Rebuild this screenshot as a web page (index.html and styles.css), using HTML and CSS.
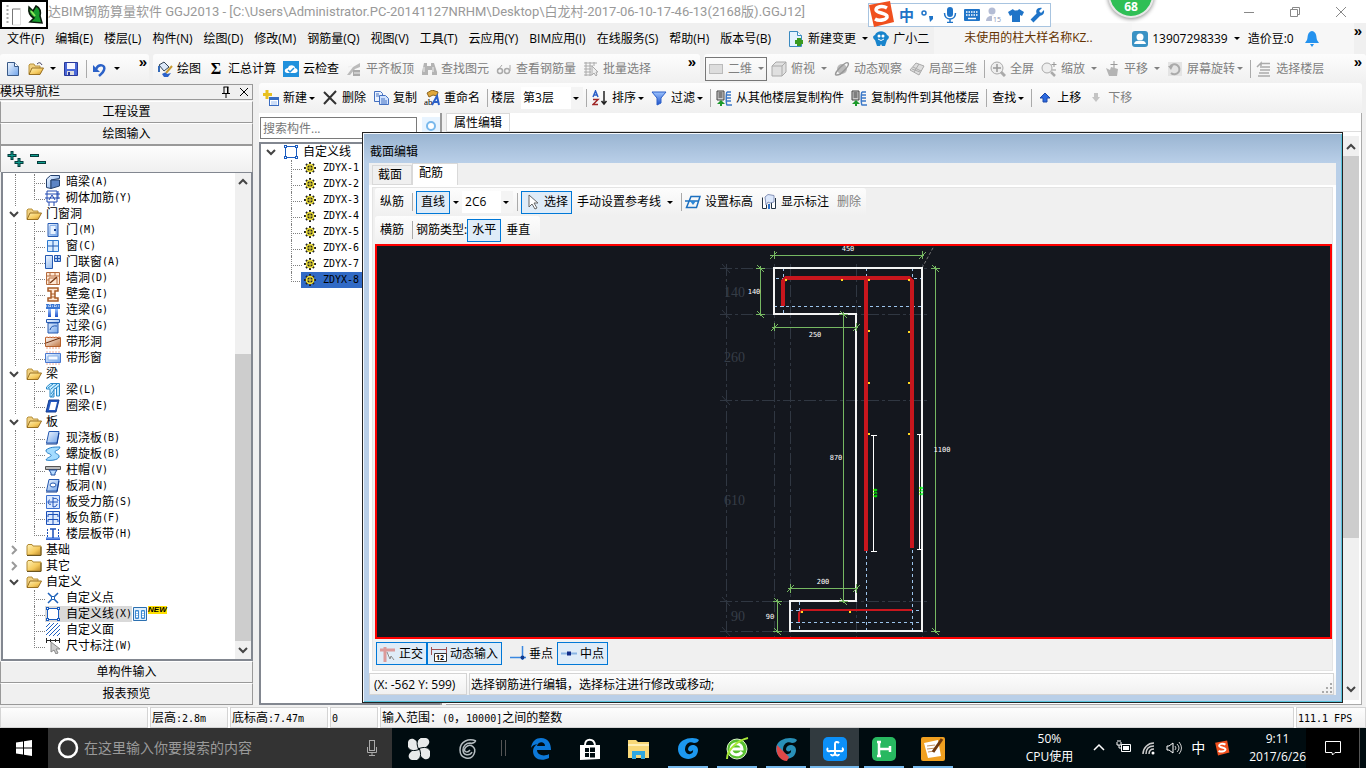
FILE: index.html
```html
<!DOCTYPE html>
<html lang="zh-CN">
<head>
    <meta charset="UTF-8">
    <meta name="viewport" content="width=device-width, initial-scale=1.0">
    <title>GGJ2013</title>
    <link rel="stylesheet" href="styles.css">
</head>
<body>
    <!-- shared gradients and repeated icons -->
    <svg class="defs" width="0" height="0">
        <defs>
            <linearGradient id="gold" x1="0" y1="0" x2="1" y2="1"><stop offset="0" stop-color="#fff3b8"/><stop offset=".6" stop-color="#f5c95c"/><stop offset="1" stop-color="#b8862a"/></linearGradient>
            <linearGradient id="blue" x1="0" y1="0" x2="1" y2="1"><stop offset="0" stop-color="#f4f9ff"/><stop offset="1" stop-color="#6fa3ea"/></linearGradient>
            <linearGradient id="deep" x1="0" y1="0" x2="0" y2="1"><stop offset="0" stop-color="#9cc3ff"/><stop offset="1" stop-color="#1c50c8"/></linearGradient>
            <linearGradient id="brown" x1="0" y1="0" x2="1" y2="1"><stop offset="0" stop-color="#fff"/><stop offset="1" stop-color="#c0723c"/></linearGradient>
        </defs>
        <symbol id="open" viewBox="0 0 16 16"><path d="M1 13V4l1-1h4l1 2h5v2" fill="#f0d080" stroke="#b8923c"/><path d="M1 13.500 4 7h11.500L12 13.500z" fill="url(#gold)" stroke="#9a7020"/></symbol>
        <symbol id="folder" viewBox="0 0 16 16"><path d="M1 13V4l1-1.500h4L7 4h8v9z" fill="url(#gold)" stroke="#b08830"/><path d="M1 13.500h14V5" fill="none" stroke="#6b5520"/></symbol>
        <symbol id="down" viewBox="0 0 10 10"><path d="M1 3l4 4 4-4" fill="none" stroke="#444" stroke-width="2"/></symbol>
        <symbol id="up" viewBox="0 0 10 10"><path d="M1 7l4-4 4 4" fill="none" stroke="#444" stroke-width="2"/></symbol>
        <symbol id="right" viewBox="0 0 10 10"><path d="M3 1l4 4-4 4" fill="none" stroke="#999" stroke-width="2"/></symbol>
        <symbol id="polyline" viewBox="0 0 16 16"><path d="M2.500 2.500h11v11h-11z" fill="#fff" stroke="#1a5cc0"/><path d="M1 1h3v3H1zM12 1h3v3h-3zM1 12h3v3H1zM12 12h3v3h-3z" fill="#1a5cc0"/><path d="M2 2h1v1H2zM13 2h1v1h-1zM2 13h1v1H2zM13 13h1v1h-1z" fill="#fff"/></symbol>
        <symbol id="gear" viewBox="0 0 12 12"><path d="M6 0v12M0 6h12M2 2l8 8M10 2l-8 8" stroke="#222" stroke-width="2"/><circle cx="6" cy="6" r="3.500" fill="#222" stroke="#f5e63a" stroke-width="1.500"/><path d="M6 3v6M3 6h6" stroke="#f5e63a"/></symbol>
        <symbol id="sogou" viewBox="0 0 28 28"><path d="M2 5 23 1l4 21-20 5z" fill="#f0501e"/><path d="M20 8c-5-3-11-1-11 2s10 3 11 6-7 6-12 3" fill="none" stroke="#fff" stroke-width="3.500"/></symbol>
        <symbol id="copyto" viewBox="0 0 16 16"><path d="M1 1h7v9H1z" fill="#ccc" stroke="#444"/><path d="M2.500 3h4M2.500 5h4M2.500 7h4" stroke="#333"/><path d="M11 2c-1 1-1 12 0 13h5M11 2h4M10 5h5M10 8h5M10 11h5" fill="none" stroke="#3b78c8" stroke-width="1.500"/><path d="M4 16v-2H1l4-4 4 4H6v2z" fill="#1d9a2c"/></symbol>
    </svg>

    <header class="titlebar">
        <span class="app-mark">
            <svg width="42" height="24" viewBox="0 0 42 24"><path d="M4.500 2v20" stroke="#aaa" stroke-width="2" stroke-dasharray="2 2"/><path d="M9.500 22V6h8" fill="none" stroke="#777"/><path d="M17.500 6v16h-8" fill="none" stroke="#ddd"/><path d="M26 4l4 4 3-5c4 2 5 6 4 10l2 7-12-1 4-4c-4-2-6-5-5-11z" fill="#169a2c" stroke="#0b1a0c" stroke-width="1.500"/><path d="M28 8l4 5" stroke="#8ee85a" stroke-width="2"/></svg>
        </span>
        <h1>达BIM钢筋算量软件 GGJ2013 - [C:\Users\Administrator.PC-20141127NRHM\Desktop\白龙村-2017-06-10-17-46-13(2168版).GGJ12]</h1>
        <div class="window-buttons">
            <button aria-label="最小化"><svg width="12" height="12"><path d="M1 6.500h10" stroke="#888"/></svg></button>
            <button aria-label="还原"><svg width="12" height="12"><path d="M1.500 3.500h7v7h-7zM3.500 3V1.500h7v7H9" fill="none" stroke="#888"/></svg></button>
            <button aria-label="关闭"><svg width="12" height="12"><path d="M1 1l10 10M11 1L1 11" stroke="#888"/></svg></button>
        </div>
    </header>

    <div class="ime-bar">
        <svg class="ime-logo" width="28" height="28"><use href="#sogou"/></svg>
        <b>中</b>
        <svg width="16" height="16"><circle cx="4" cy="6" r="2" fill="none" stroke="#1f74c8" stroke-width="1.500"/><path d="M9 9h4v3l-3 3" fill="#1f74c8"/></svg>
        <svg width="16" height="16"><rect x="5" y="0" width="6" height="10" rx="3" fill="#1f74c8"/><path d="M2.500 6c0 8 11 8 11 0M8 12v3M5 15.500h6" fill="none" stroke="#1f74c8" stroke-width="1.500"/></svg>
        <svg width="16" height="16"><rect y="2" width="16" height="12" rx="1" fill="#1f74c8"/><path d="M2 5h12M2 8h12" stroke="#fff" stroke-width="1.500" stroke-dasharray="1.500 1"/><path d="M4 11.500h8" stroke="#fff" stroke-width="1.500"/></svg>
        <svg width="16" height="16"><circle cx="6" cy="4" r="3.500" fill="#b4bcd4"/><path d="M0 14c0-7 12-7 12 0z" fill="#b4bcd4"/><rect x="6" y="9" width="10" height="6" fill="#fff"/><text x="7" y="15" font-size="7" fill="#8892b4">15</text></svg>
        <svg width="16" height="16"><path d="M5 2c1 2 5 2 6 0l5 3-2 4-2-1v7H4V8L2 9 0 5z" fill="#1f74c8"/></svg>
        <svg width="16" height="16"><path d="M2 14l7-7" stroke="#1f74c8" stroke-width="4"/><path d="M14 3l-3 3-2-2 3-3c-5-1-7 3-5 6s8 2 7-4z" fill="#1f74c8"/></svg>
    </div>
    <div class="speed-ball">68</div>

    <nav class="menubar">
        <div class="menus">
            <button>文件(F)</button>
            <button>编辑(E)</button>
            <button>楼层(L)</button>
            <button>构件(N)</button>
            <button>绘图(D)</button>
            <button>修改(M)</button>
            <button>钢筋量(Q)</button>
            <button>视图(V)</button>
            <button>工具(T)</button>
            <button>云应用(Y)</button>
            <button>BIM应用(I)</button>
            <button>在线服务(S)</button>
            <button>帮助(H)</button>
            <button>版本号(B)</button>
        </div>
        <button class="tool drop"><svg width="16" height="16"><path d="M1.500.5h8l4 4v11h-12z" fill="#e4f3ff" stroke="#3a8ac0"/><path d="M9.500.5v4h4" fill="#fff" stroke="#3a8ac0"/><path d="M11 7v8M7 11h8" stroke="#3a9a20" stroke-width="4"/></svg>新建变更</button>
        <button class="tool"><svg width="16" height="16"><path d="M2 4C4-1 12-1 14 4c3 1 2 4 0 5-1 3-1 3-2 6H9l-1-2-1 2H4c-1-3-1-3-2-6-2-1-3-4 0-5z" fill="#1884cc"/><circle cx="6" cy="5" r="1.500" fill="#fff"/><circle cx="10" cy="5" r="1.500" fill="#fff"/><path d="M5 8q3 3 6 0" fill="none" stroke="#fff"/></svg>广小二</button>
        <div class="notice">未使用的柱大样名称KZ..</div>
        <div class="account">
            <button class="tool drop"><svg width="16" height="16"><rect width="16" height="16" rx="3" fill="#3a92c4"/><circle cx="8" cy="6" r="3.500" fill="#fff"/><path d="M2 13q1-4 6-3 5-1 6 3z" fill="#fff"/></svg>13907298339</button>
            <span>造价豆:0</span>
            <svg width="16" height="16"><path d="M8 0c5 1 4 6 5 9l2 3H1l2-3c1-3 0-8 5-9zM6 13h4l-2 3z" fill="#2492ee"/></svg>
        </div>
        <button class="more">»</button>
    </nav>

    <div class="toolrow">
        <div class="strip strip-file">
            <button class="tool" aria-label="新建"><svg width="16" height="16"><path d="M2.500 1.500h7l4 4v9h-11z" fill="url(#blue)" stroke="#3a5a88"/><path d="M9.500 1.500v4h4" fill="#fff" stroke="#3a5a88"/></svg></button>
            <button class="tool drop" aria-label="打开"><svg width="16" height="16"><use href="#open"/><path d="M9 3q3-3 5 1" fill="none" stroke="#446"/></svg></button>
            <button class="tool" aria-label="保存"><svg width="16" height="16"><path d="M1.500 1.500h13v13h-13z" fill="#4a68d8" stroke="#28389a"/><path d="M4 2h8v6H4z" fill="#f6f6ff"/><path d="M4 10h7v4H4z" fill="#ddd"/><path d="M5 11h2v3H5z" fill="#28389a"/></svg></button>
            <i class="sep"></i>
            <button class="tool drop" aria-label="撤销"><svg width="16" height="16"><path d="M4 8c3-6 10-4 8 1-1 3-3 4-5 6" fill="none" stroke="#2c62c8" stroke-width="2.500"/><path d="M1 4v7h7z" fill="#2c62c8"/></svg></button>
            <button class="more">»</button>
        </div>
        <div class="strip strip-draw">
            <button class="tool"><svg width="16" height="16"><path d="M2 4l5-3 5 5-5 4z" fill="#dce8f8" stroke="#345"/><path d="M2 5v6" stroke="#346ab8" stroke-width="2"/><path d="M15 5 9 12" stroke="#c89a30" stroke-width="2"/><path d="M5 13q4-3 5 0l4-1-3 4H7z" fill="#2c62c8"/></svg>绘图</button>
            <button class="tool"><span class="sigma">Σ</span>汇总计算</button>
            <button class="tool"><svg width="16" height="16"><rect width="16" height="16" fill="#2090dc"/><path d="M4 12c-4-1-2-5 1-5 1-4 7-3 7 0 4 1 3 5 0 5z" fill="#fff"/><path d="M5 9l2 2 4-4" fill="none" stroke="#2090dc" stroke-width="1.500"/></svg>云检查</button>
            <button class="tool" disabled><svg width="16" height="16"><path d="M1 14l6-8 7-4v4L9 8l-5 6z" fill="#bbb"/><path d="M7 9h7v6H7z" fill="#aaa"/><path d="M2 6l4-1M8 12h6" stroke="#eee"/></svg>平齐板顶</button>
            <button class="tool" disabled><svg width="16" height="16"><path d="M3 2h3v3h4V2h3l3 9v3h-5V9H7v5H1v-3z" fill="#b4b4b4"/><path d="M3 6v5M12 6v5" stroke="#eee"/></svg>查找图元</button>
            <button class="tool" disabled><svg width="16" height="16"><circle cx="4" cy="10" r="2.500" fill="none" stroke="#aaa" stroke-width="1.500"/><circle cx="11" cy="10" r="2.500" fill="none" stroke="#aaa" stroke-width="1.500"/><path d="M2 9l4-5M14 10V4" stroke="#aaa"/></svg>查看钢筋量</button>
            <button class="tool" disabled><svg width="16" height="16"><path d="M1 2h13M1 5h9M1 8h7M1 11h7M1 14h8M3 1v14M7 1v14M11 1v4" stroke="#aaa"/><path d="M9 5v9l2-2 2 3 1-1-1-3h2z" fill="#eee" stroke="#aaa"/></svg>批量选择</button>
            <button class="more">»</button>
        </div>
        <div class="strip strip-view">
            <button class="tool drop boxed" disabled><svg width="16" height="16"><rect x="1.500" y="3.500" width="13" height="9" fill="#ddd" stroke="#bbb"/></svg>二维</button>
            <button class="tool drop" disabled><svg width="16" height="16"><path d="M1 5l4-4h10v10l-4 4H1zM1 5h10v10M11 5l4-4" fill="#e0e0e0" stroke="#aaa"/></svg>俯视</button>
            <button class="tool" disabled><svg width="16" height="16"><circle cx="8" cy="8" r="5" fill="#bbb"/><path d="M2 14C-1 12 12 0 14 2s-7 13-12 12z" fill="none" stroke="#999" stroke-width="1.500"/></svg>动态观察</button>
            <button class="tool" disabled><svg width="16" height="16"><path d="M1 9l6-7 8 3-5 9z" fill="#ddd" stroke="#aaa"/><path d="M4 6l8 4M10 3l-5 8M3 8l8 3" stroke="#aaa"/></svg>局部三维</button>
            <i class="sep"></i>
            <button class="tool" disabled><svg width="16" height="16"><circle cx="7" cy="7" r="6" fill="#eee" stroke="#aaa"/><path d="M7 3v8M3 7h8" stroke="#999" stroke-width="1.500"/><path d="M11 11l4 4" stroke="#aaa" stroke-width="3"/></svg>全屏</button>
            <button class="tool drop" disabled><svg width="16" height="16"><circle cx="6" cy="7" r="5" fill="#eee" stroke="#aaa"/><path d="M10 11l4 4" stroke="#aaa" stroke-width="2.500"/><path d="M13 1v5M10.500 3.500h5M11 9h4" stroke="#999"/></svg>缩放</button>
            <button class="tool drop" disabled><svg width="16" height="16"><path d="M2 7l4 2 1-3 7 2-1 7H5z" fill="#b4b4b4"/><path d="M10 0v7M6.500 3.500h7" stroke="#999"/></svg>平移</button>
            <button class="tool drop tight" disabled><svg width="16" height="16"><path d="M1 1h14v14H1z" fill="#e4e4e4"/><path d="M3 6a5 5 0 1 1 1 6" fill="none" stroke="#aaa" stroke-width="2"/><path d="M1 5h5L4 9z" fill="#aaa"/></svg>屏幕旋转</button>
            <i class="sep"></i>
            <button class="tool" disabled><svg width="16" height="16"><path d="M1 6l4-4v3M4 6h10M4 9h10M3 12h10M2 15h12M5 2.500h9" fill="none" stroke="#aaa" stroke-width="1.500"/></svg>选择楼层</button>
            <button class="more">»</button>
        </div>
    </div>

    <main class="workspace">
        <aside class="nav-panel">
            <div class="nav-head">
                <h2>模块导航栏</h2>
                <svg width="12" height="12"><path d="M3.500 1h5M4 1v6M7.500 1v6M8 1v6M2 7.500h8M6 8v4" stroke="#000"/></svg>
                <svg width="12" height="12"><path d="M2 2l8 8M10 2l-8 8" stroke="#000"/></svg>
            </div>
            <button class="nav-tab">工程设置</button>
            <button class="nav-tab">绘图输入</button>
            <div class="nav-tools">
                <svg width="18" height="16"><path d="M5 0v9M.5 4.500h9M12 7v9M7.500 11.500h9" stroke="#063c3c" stroke-width="3"/><path d="M5 1v7M1.500 4.500h7M12 8v7M8.500 11.500h7" stroke="#10a090"/></svg>
                <svg width="18" height="16"><path d="M0 4.500h9M7 11.500h9" stroke="#063c3c" stroke-width="3"/><path d="M1 4.500h7M8 11.500h7" stroke="#10a090"/></svg>
            </div>
            <div class="nav-tree">
                <ul class="tree">
                    <li class="group"><ul>
                        <li><svg width="16" height="16"><path d="M1.500 5l4-3.500h9v3L6 6v8.500l-4.500-1z" fill="url(#blue)" stroke="#24406c"/><path d="M6 6h8.500v6L6 14.500z" fill="#5c84c4" stroke="#24406c"/></svg>暗梁<kbd>(A)</kbd></li>
                        <li><svg width="16" height="16"><path d="M2 1h10v11H2zM0 4h15M0 8h15M4 12v4M9 12v4M13 1v8M4 10l3-5 3 5" fill="none" stroke="#2048b0"/></svg>砌体加筋<kbd>(Y)</kbd></li>
                    </ul></li>
                    <li class="group">
                        <div class="head"><svg width="10" height="10"><use href="#down"/></svg><svg width="16" height="16"><use href="#open"/></svg>门窗洞</div>
                        <ul>
                            <li><svg width="16" height="16"><path d="M3 1.500h10v13H3z" fill="url(#blue)" stroke="#2458b0"/><path d="M5 3.500h6v9H5z" fill="#e8f2ff" stroke="#88b0e8"/><path d="M9 7h2v2H9z" fill="#123c90"/></svg>门<kbd>(M)</kbd></li>
                            <li><svg width="16" height="16"><path d="M2.500 2.500h11v11h-11z" fill="#d8ecff" stroke="#2c78d0"/><path d="M8 3v11M3 8h10" stroke="#1c58b0"/></svg>窗<kbd>(C)</kbd></li>
                            <li><svg width="16" height="16"><path d="M.5 1.500h7v13h-7zM9.500 1.500h6v6h-6z" fill="url(#blue)" stroke="#2458b0"/><path d="M12.500 2v6M10 4.500h6" stroke="#2458b0"/></svg>门联窗<kbd>(A)</kbd></li>
                            <li><svg width="16" height="16"><path d="M1.500 2.500h13v12h-13z" fill="#ffe8d4" stroke="#b46a3c"/><path d="M1 6h14M5 2v4M10 2v4M1 10h3M4 14V8h8v6" fill="none" stroke="#b46a3c"/><path d="M5 13l7-6" stroke="#7a3c18" stroke-width="1.500"/></svg>墙洞<kbd>(D)</kbd></li>
                            <li><svg width="16" height="16"><path d="M3 2h10v3h-3v7h3v3H3v-3h3V5H3z" fill="#ffe8d4" stroke="#a85c28" stroke-width="1.500"/><path d="M6 8h4M6 11h4" stroke="#a85c28"/></svg>壁龛<kbd>(I)</kbd></li>
                            <li><svg width="16" height="16"><path d="M1 2h14v5H1z" fill="#3c78d4"/><path d="M1 4h14M5 2v3M10 2v3" stroke="#fff" stroke-dasharray="1 1"/><path d="M3 7h3v8H3zM10 7h3v8h-3z" fill="url(#deep)"/></svg>连梁<kbd>(G)</kbd></li>
                            <li><svg width="16" height="16"><path d="M1.500 1.500h13v3h-13zM3 5h10v10H3z" fill="url(#blue)" stroke="#2458b0"/><path d="M5 12q1-5 7-4" fill="none" stroke="#2458b0"/></svg>过梁<kbd>(G)</kbd></li>
                            <li><svg width="16" height="16"><path d="M.5 3.500h15v9H.5z" fill="url(#brown)" stroke="#b4602c"/><path d="M1 9l14-5" stroke="#6a2c0c"/><path d="M1 3h14M1 14h14" stroke="#f0a080" stroke-dasharray="2 1"/></svg>带形洞</li>
                            <li><svg width="16" height="16"><path d="M.5 3.500h15v9H.5z" fill="url(#blue)" stroke="#4878d0"/><path d="M3 6h10v4H3z" fill="#f4f8ff" stroke="#88b0e8"/><path d="M1 2h14M1 14h14" stroke="#f0b0a0" stroke-dasharray="2 1"/></svg>带形窗</li>
                        </ul>
                    </li>
                    <li class="group">
                        <div class="head"><svg width="10" height="10"><use href="#down"/></svg><svg width="16" height="16"><use href="#open"/></svg>梁</div>
                        <ul>
                            <li><svg width="16" height="16"><path d="M1.500 5l4-3.500h9V14h-3V6L9 7v8H5V7H1.500z" fill="#c4ecff" stroke="#2888c8"/><path d="M3 6l5-4M6 7l6-5M6 12l3-4M6 15l3-4M11 6l4-3" stroke="#2888c8"/></svg>梁<kbd>(L)</kbd></li>
                            <li><svg width="16" height="16"><path d="M4 2h10l-3 12H1z" fill="#2458c0" stroke="#123c90"/><path d="M6 4h6l-2 8H4z" fill="#fff"/></svg>圈梁<kbd>(E)</kbd></li>
                        </ul>
                    </li>
                    <li class="group">
                        <div class="head"><svg width="10" height="10"><use href="#down"/></svg><svg width="16" height="16"><use href="#open"/></svg>板</div>
                        <ul>
                            <li><svg width="16" height="16"><path d="M4 1.500h10L12 13H1.500z" fill="url(#blue)" stroke="#2458b0"/><path d="M1 14h11l2-11" fill="none" stroke="#123c90"/></svg>现浇板<kbd>(B)</kbd></li>
                            <li><svg width="16" height="16"><path d="M1 4c4-3 8-3 14-3-1 4-5 3-5 5s5 2 4 5-8 4-13 3c1-3 6-3 5-5S1 8 1 4z" fill="#a4dcff" stroke="#2880c8"/></svg>螺旋板<kbd>(B)</kbd></li>
                            <li><svg width="16" height="16"><path d="M.5 4.500h15v3H.5z" fill="#bbb" stroke="#555"/><path d="M4 8h8l-2 3v2H6v-2z" fill="#b8dcff" stroke="#1c4ca0"/></svg>柱帽<kbd>(V)</kbd></li>
                            <li><svg width="16" height="16"><path d="M4 1.500h10L12 13H1.500z" fill="url(#blue)" stroke="#2458b0"/><ellipse cx="8" cy="7" rx="3" ry="2" fill="#fff" stroke="#2458b0"/><path d="M1 14h11l2-11" fill="none" stroke="#123c90"/></svg>板洞<kbd>(N)</kbd></li>
                            <li><svg width="16" height="16"><path d="M1.500 1.500h13v13h-13z" fill="#dceaff" stroke="#3c70d0"/><path d="M8 3v10M3 8c0-1 1-2 2-2M3 8c0 2 2 3 3 2M13 7c0-3-4-3-5-2M8 13c3 0 4-2 4-3M3 8h10" fill="none" stroke="#1c50b8"/></svg>板受力筋<kbd>(S)</kbd></li>
                            <li><svg width="16" height="16"><path d="M1.500 1.500h13v13h-13z" fill="#dceaff" stroke="#1c50b8"/><path d="M8 2v12M3 7V4.500h10V7M3 12V9.500h10V12" fill="none" stroke="#1c50b8"/></svg>板负筋<kbd>(F)</kbd></li>
                            <li><svg width="16" height="16"><path d="M1 11h14v3H1z" fill="url(#deep)"/><path d="M8 3v9M5 3h6" stroke="#1c50b8" stroke-width="1.500"/><path d="M2.500 3v9M13.500 3v9" stroke="#1c50b8" stroke-dasharray="2 1"/></svg>楼层板带<kbd>(H)</kbd></li>
                        </ul>
                    </li>
                    <li class="group"><div class="head"><svg width="10" height="10"><use href="#right"/></svg><svg width="16" height="16"><use href="#folder"/></svg>基础</div></li>
                    <li class="group"><div class="head"><svg width="10" height="10"><use href="#right"/></svg><svg width="16" height="16"><use href="#folder"/></svg>其它</div></li>
                    <li class="group">
                        <div class="head"><svg width="10" height="10"><use href="#down"/></svg><svg width="16" height="16"><use href="#open"/></svg>自定义</div>
                        <ul>
                            <li><svg width="16" height="16"><path d="M3 3l10 10M13 3L3 13" stroke="#1c60b8" stroke-width="1.500"/><path d="M6.500 6.500h3v3h-3z" fill="#fff" stroke="#1c60b8"/></svg>自定义点</li>
                            <li><span class="current"><svg width="16" height="16"><use href="#polyline"/></svg>自定义线<kbd>(X)</kbd></span><svg class="video" width="14" height="14"><path d="M.5.5h13v13H.5z" fill="#dff0ff" stroke="#2c70b0"/><path d="M2.500 3.500h3v8h-3zM8.500 3.500h3v8h-3z" fill="#fff" stroke="#3a88d0"/><path d="M4 4v8M10 4v8" stroke="#3a88d0" stroke-dasharray="1 1"/></svg><em class="new">NEW</em></li>
                            <li><svg width="16" height="16"><path d="M1 5l4-4M1 9l8-8M1 13l12-12M4 14L15 3M8 14l7-7M12 14l3-3" stroke="#2060c0"/></svg>自定义面</li>
                            <li><svg width="16" height="16"><path d="M1.500 0v5M14.500 0v5M1 2.500h14M5.500 1v3M10.500 1v3" stroke="#222"/><path d="M6 4v10l3-2 2 4 2-1-2-4h4z" fill="#ccc" stroke="#888"/></svg>尺寸标注<kbd>(W)</kbd></li>
                        </ul>
                    </li>
                </ul>
                <div class="scroll nav-scroll">
                    <svg width="10" height="10"><use href="#up"/></svg>
                    <i class="track"></i><i class="thumb"></i>
                    <svg width="10" height="10"><use href="#down"/></svg>
                </div>
            </div>
            <button class="nav-tab">单构件输入</button>
            <button class="nav-tab">报表预览</button>
        </aside>

        <section class="component-pane">
            <div class="strip strip-component">
                <button class="tool drop tight"><svg width="16" height="16"><path d="M4 0v9M0 4.500h9" stroke="#e8c020" stroke-width="3"/><rect x="6.500" y="7.500" width="9" height="8" fill="#fff" stroke="#3a6cc0"/><path d="M7 9h8" stroke="#3a6cc0" stroke-width="2"/><path d="M8 12h6M8 14h6" stroke="#9abcf0"/></svg>新建</button>
                <button class="tool"><svg width="16" height="16"><path d="M2 2l12 12M14 1L2 14" stroke="#333" stroke-width="2"/></svg>删除</button>
                <button class="tool"><svg width="16" height="16"><path d="M1.500 1.500h6l2 2v8h-8z" fill="#eaf2ff" stroke="#4470c0"/><path d="M6.500 5.500h6l3 3v6h-9z" fill="#d0e2ff" stroke="#4470c0"/><path d="M3 4h3M3 6h3M8 9h4M8 11h6M8 13h6" stroke="#4470c0"/></svg>复制</button>
                <button class="tool"><svg width="16" height="16"><path d="M3 3l5-3 6 2-1 4-4-1-4 2z" fill="#e0a83c" stroke="#8a6420"/><text x="0" y="15" font-size="9" font-family="Liberation Serif">ab</text><path d="M8 15l5-9 2 9M10 12h5" fill="none" stroke="#2c60c8" stroke-width="2"/></svg>重命名</button>
                <i class="sep"></i>
                <label class="combo">楼层<select class="floor"><option>第3层</option></select></label>
                <i class="sep"></i>
                <button class="tool drop tight"><svg width="16" height="16"><path d="M1 7l2.500-6L6 7M2 5h3" fill="none" stroke="#2c60c8" stroke-width="1.500"/><path d="M1 9.500h5l-5 5h5" fill="none" stroke="#a02828" stroke-width="1.500"/><path d="M12 1v13M9.500 11l2.500 3 2.500-3" fill="none" stroke="#222" stroke-width="1.500"/></svg>排序</button>
                <button class="tool drop tight"><svg width="16" height="16"><path d="M1 2h14L10 8v5l-4 2V8z" fill="url(#deep)" stroke="#2c60c8"/></svg>过滤</button>
                <i class="sep"></i>
                <button class="tool"><svg width="16" height="16"><use href="#copyto"/></svg>从其他楼层复制构件</button>
                <button class="tool"><svg width="16" height="16"><use href="#copyto"/></svg>复制构件到其他楼层</button>
                <i class="sep"></i>
                <button class="tool drop tight">查找</button>
                <i class="sep"></i>
                <button class="tool"><svg width="16" height="16"><path d="M8 3l5 5h-3v4H6V8H3z" fill="#2c6ae0" stroke="#1c48a8"/></svg>上移</button>
                <button class="tool" disabled><svg width="16" height="16"><path d="M8 12l4-5h-2V3H6v4H4z" fill="#c4c4c4"/></svg>下移</button>
            </div>
            <div class="columns">
                <div class="component-list">
                    <div class="search">
                        <input type="text" placeholder="搜索构件..." aria-label="搜索构件">
                        <svg width="18" height="18"><rect width="18" height="18" fill="#e8f4ff"/><circle cx="9" cy="9" r="4" fill="#fff" stroke="#78b8ec" stroke-width="2"/></svg>
                    </div>
                    <div class="list-box">
                        <ul class="tree">
                            <li class="group">
                                <div class="head"><svg width="10" height="10"><use href="#down"/></svg><svg width="16" height="16"><use href="#polyline"/></svg>自定义线</div>
                                <ul>
                                    <li><svg width="12" height="12"><use href="#gear"/></svg><kbd>ZDYX-1</kbd></li>
                                    <li><svg width="12" height="12"><use href="#gear"/></svg><kbd>ZDYX-2</kbd></li>
                                    <li><svg width="12" height="12"><use href="#gear"/></svg><kbd>ZDYX-3</kbd></li>
                                    <li><svg width="12" height="12"><use href="#gear"/></svg><kbd>ZDYX-4</kbd></li>
                                    <li><svg width="12" height="12"><use href="#gear"/></svg><kbd>ZDYX-5</kbd></li>
                                    <li><svg width="12" height="12"><use href="#gear"/></svg><kbd>ZDYX-6</kbd></li>
                                    <li><svg width="12" height="12"><use href="#gear"/></svg><kbd>ZDYX-7</kbd></li>
                                    <li><span class="selected"><svg width="12" height="12"><use href="#gear"/></svg><kbd>ZDYX-8</kbd></span></li>
                                </ul>
                            </li>
                        </ul>
                    </div>
                </div>
                <div class="property">
                    <button class="property-tab">属性编辑</button>
                    <div class="property-body">
                        <div class="scroll property-scroll">
                            <svg width="10" height="10"><use href="#up"/></svg>
                            <i class="thumb"></i><i class="track"></i>
                            <svg width="10" height="10"><use href="#down"/></svg>
                        </div>
                    </div>
                </div>
            </div>
        </section>

        <section class="dialog" role="dialog" aria-label="截面编辑">
            <h2>截面编辑</h2>
            <div class="dialog-body">
                <div class="tabs">
                    <button>截面</button>
                    <button class="active">配筋</button>
                </div>
                <div class="tab-page">
                    <div class="strip bar">
                        <span>纵筋</span>
                        <i class="sep"></i>
                        <button class="toggle on">直线</button><i class="caret"></i>
                        <div class="combo"><select class="spec" aria-label="钢筋规格"><option>2C6</option></select></div>
                        <i class="sep"></i>
                        <button class="toggle icon on"><svg width="16" height="16"><path d="M4 1v12l3-3 3 5 2-1-3-5h4z" fill="#fff" stroke="#666"/></svg>选择</button>
                        <button class="tool drop">手动设置参考线</button>
                        <i class="sep"></i>
                        <button class="tool"><svg width="16" height="16"><path d="M6 2.500h9L11.500 13.500h-10zM0 7h13" fill="none" stroke="#1c70c0" stroke-width="1.500"/><path d="M5 7h6l-3 4z" fill="#2c88d8"/></svg>设置标高</button>
                        <button class="tool"><svg width="16" height="16"><path d="M1.500 3.500v11h4v-7M14.500 4v10.500h-4V8" fill="#fff" stroke="#234"/><path d="M4 3l3-2.500 6 1V8L9 9 7 8 5 11z" fill="#dce8fc" stroke="#8894b8"/><path d="M8 10v5" stroke="#2c70c8" stroke-width="2"/></svg>显示标注</button>
                        <button class="tool" disabled>删除</button>
                    </div>
                    <div class="strip bar">
                        <span>横筋</span>
                        <i class="sep"></i>
                        <div class="choice"><span>钢筋类型:</span><button class="toggle on">水平</button><button class="toggle">垂直</button></div>
                    </div>
                    <div class="canvas">
                        <svg viewBox="377 246 953 391">
                            <!-- axis grid -->
                            <g class="grid">
                                <path d="M720 268.500h207M720 314.500h207M720 400.500h207M720 601.500h207M720 631.500h207M726.500 264v373M774.500 264v373M790.500 264v373M856.500 264v373M922.500 264v373"/>
                                <path class="slash" d="M722 264l8 9M722 310l8 9M722 396l8 9M722 597l8 9M722 627l8 9"/>
                                <path class="ray" d="M922 268l12-22"/>
                            </g>
                            <g class="axis-text">
                                <text x="724" y="297">140</text>
                                <text x="724" y="362">260</text>
                                <text x="724" y="505">610</text>
                                <text x="731" y="621">90</text>
                            </g>
                            <!-- concrete cover -->
                            <path class="cover" d="M774 306.500h148M776 278.500h7M914 278.500h8M783.500 268v46M866.500 268v363M912.500 268v363M790 610.500h132M790 622.500h132M799.500 602v29"/>
                            <path class="outline" d="M774 268h148v363H790v-30h66V314h-82z"/>
                            <!-- bars -->
                            <path class="bar-main" d="M783 306v-25l3-3h123l3 3v267M866 278v273"/>
                            <path class="bar-thin" d="M799 622v-9l3-3h110"/>
                            <path class="dots" d="M785 280h2M841 280h2M868 280h2M908 280h2M868 331h2M908 332h2M868 383h2M908 383h2M868 434h2M908 434h2M801 612h2M849 612h2"/>
                            <!-- dimensions -->
                            <g class="dim">
                                <path d="M770 255.500h154M774.500 251v8M922.500 251v8M770 259l7-7M919 259l7-7"/>
                                <path d="M760.500 266v50M756 268.500h9M756 314.500h9M757 265l7 7M757 311l7 7"/>
                                <path d="M772 327.500h86M774.500 323v8M856.500 323v8M771 331l7-7M853 331l7-7"/>
                                <path d="M843.500 312v291M839 314.500h9M839 601.500h9M840 311l7 7M840 598l7 7"/>
                                <path d="M935.500 266v367M931 268.500h9M931 631.500h9M932 265l7 7M932 628l7 7"/>
                                <path d="M788 588.500h70M790.500 584v9M856.500 584v9M787 592l7-7M853 592l7-7"/>
                                <path d="M777.500 599v34M773 601.500h9M773 631.500h9M774 598l7 7M774 628l7 7"/>
                            </g>
                            <path class="bar-dim" d="M873.500 435v116M871 435.500h6M871 551.500h6M919.500 434v115M917 434.500h6M917 549.500h6"/>
                            <g class="dim-text">
                                <text x="848" y="251">450</text>
                                <text x="754" y="294">140</text>
                                <text x="815" y="337">250</text>
                                <text x="836" y="460">870</text>
                                <text x="942" y="452">1100</text>
                                <text x="823" y="584">200</text>
                                <text x="770" y="619">90</text>
                            </g>
                            <g class="bar-text">
                                <text transform="translate(877 493) rotate(-90)">650</text>
                                <text transform="translate(923 491) rotate(-90)">650</text>
                            </g>
                        </svg>
                    </div>
                    <div class="snap">
                        <button class="toggle icon on"><svg width="16" height="16"><path d="M0 4h15M5 1v15" stroke="#dc9a9a" stroke-width="3"/><path d="M7 6l3 7 1-3 3 4" fill="#fff" stroke="#888"/></svg>正交</button>
                        <button class="toggle icon on"><svg width="16" height="16"><path d="M.5 1v8M15.500 1v8M1 3.500h14" stroke="#a05050"/><path d="M3.500 7.500h12v8h-12z" fill="#fff" stroke="#333"/><text x="5" y="14" font-size="7" font-weight="bold">12</text></svg>动态输入</button>
                        <button class="toggle icon gap"><svg width="16" height="16"><path d="M0 11.500h16M12.500 0v14" stroke="#3a88e0" stroke-width="1.500"/><circle cx="12.500" cy="11.500" r="2" fill="#123c90"/></svg>垂点</button>
                        <button class="toggle icon on"><svg width="16" height="16"><path d="M0 7.500h16" stroke="#88b4e4" stroke-width="2"/><path d="M6 5.500h4v4H6z" fill="#102c88"/></svg>中点</button>
                    </div>
                </div>
                <footer class="dialog-status">
                    <span class="coord">(X: -562 Y: 599)</span>
                    <span class="hint">选择钢筋进行编辑，选择标注进行修改或移动;</span>
                    <svg width="12" height="12"><path d="M9 1h2M5 5h2M9 5h2M1 9h2M5 9h2M9 9h2" stroke="#aaa" stroke-width="2"/></svg>
                </footer>
            </div>
        </section>
    </main>

    <footer class="statusbar">
        <span class="cell blank"></span>
        <span class="cell height">层高<kbd>:2.8m</kbd></span>
        <span class="cell base">底标高<kbd>:7.47m</kbd></span>
        <span class="cell zero"><kbd>0</kbd></span>
        <span class="cell range">输入范围：<kbd>(0</kbd>，<kbd>10000]</kbd>之间的整数</span>
        <span class="cell fps"><kbd>111.1 FPS</kbd></span>
    </footer>

    <div class="taskbar">
        <button class="start" aria-label="开始"><svg width="16" height="16"><path d="M0 2.500 7 1.500v6H0zM8 1.300 16 0v7.500H8zM0 8.500h7v6L0 13.500zM8 8.500h8V16l-8-1.300z" fill="#fff"/></svg></button>
        <label class="cortana">
            <svg width="22" height="22"><circle cx="11" cy="11" r="9" fill="none" stroke="#fff" stroke-width="2.500"/></svg>
            <input type="text" placeholder="在这里输入你要搜索的内容">
            <svg width="12" height="18"><rect x="3.500" y="1.500" width="5" height="10" fill="none" stroke="#aaa"/><path d="M1.500 8v5.500h9V8M6 13v3M3 16.500h6" fill="none" stroke="#aaa"/></svg>
        </label>
        <div class="apps">
            <button aria-label="浏览器"><svg width="24" height="24"><g fill="#e8eaea"><path d="M11 11C9 5 11 2 14 1h5c4 1 4 5 2 7-2 3-6 3-10 3z"/><path d="M11 11C9 5 11 2 14 1h5c4 1 4 5 2 7-2 3-6 3-10 3z" transform="rotate(90 12 12)"/><path d="M11 11C9 5 11 2 14 1h5c4 1 4 5 2 7-2 3-6 3-10 3z" transform="rotate(180 12 12)"/><path d="M11 11C9 5 11 2 14 1h5c4 1 4 5 2 7-2 3-6 3-10 3z" transform="rotate(270 12 12)"/></g><path d="M11.500 12C9 6 10 3 13 1M12 11.500c6-2 9-1 11 2M12.500 12c2 6 1 9-2 11M12 12.500c-6 2-9 1-11-2" fill="none" stroke="#000c10"/></svg></button>
            <button aria-label="广联达"><svg width="24" height="24"><path d="M20 4C13 1 4 4 4 13s11 11 14 4-4-11-8-7 1 7 4 3M20 4c-2 2-4 3-6 2-4 0-7 3-7 7 0 6 7 6 9 2" fill="none" stroke="#b4bcc0" stroke-width="1.500"/></svg></button>
            <i class="divider"></i>
            <button aria-label="Edge"><svg width="24" height="24"><path d="M2 11C3 4 7 1 12 1c7 0 10 5 10 12H8c0 5 7 7 12 4v4C12 25 4 22 4 14c0-3 2-6 5-7-5 0-7 4-7 4zm6-2h8c0-5-7-5-8 0z" fill="#0c78d8"/></svg></button>
            <button aria-label="应用商店"><svg width="24" height="24"><path d="M2 8h20v14l-20 1z" fill="#fff"/><path d="M7 8c0-7 9-7 10 0" fill="none" stroke="#fff" stroke-width="2"/><path d="M7 11h4v4H7zM12 10.500h5V15h-5zM7 16h4v4H7zM12 16h5v4.500h-5z" fill="#000c10"/></svg></button>
            <button aria-label="资源管理器"><svg width="24" height="24"><path d="M1 3h8l2 2h11v16H1z" fill="#f8d878"/><path d="M1 8h21" stroke="#fff0b8" stroke-width="2"/><path d="M5 22v-8h13v8h-4v-4H9v4z" fill="#30a8e0"/></svg></button>
            <button class="running" aria-label="GGJ"><svg width="24" height="24"><path d="M23 3c-3-4-21-3-21 9 0 13 20 13 20 1 0-6-9-7-10-1 0 3 4 3 5 1 1 5-7 6-8 0C9 6 14 4 18 6c3 0 4-1 5-3z" fill="#1c98f0"/></svg></button>
            <button class="running" aria-label="360"><svg width="24" height="24"><circle cx="12" cy="12" r="10" fill="#58c030" stroke="#d8f4c8"/><path d="M6 12h11c0-7-11-7-11 0 0 7 8 7 11 3" fill="none" stroke="#fff" stroke-width="3"/><path d="M2 22C2 12 14 3 23 1" fill="none" stroke="#a8e838" stroke-width="2"/></svg></button>
            <button class="running" aria-label="GCL"><svg width="24" height="24"><path d="M23 3c-3-4-21-3-21 9 0 13 20 13 20 1 0-6-9-7-10-1 0 3 4 3 5 1 1 5-7 6-8 0C9 6 14 4 18 6c3 0 4-1 5-3z" fill="#2890b8"/><path d="M3 8l12 12-2 4C6 24 1 17 3 8z" fill="#e04848"/></svg></button>
            <button class="running current-app" aria-label="GGJ2013"><svg width="24" height="24"><rect width="24" height="24" rx="5" fill="#0c90f8"/><path d="M16 6c-2-2-4-1-4 1v9c0 3-4 3-4 1M5 11c-2 2 0 4 2 3h10c3 1 4-2 2-3M12 16c0 3 4 3 4 1" fill="none" stroke="#fff" stroke-width="2"/></svg></button>
            <button class="running" aria-label="图集"><svg width="24" height="24"><rect width="24" height="24" rx="5" fill="#28b860"/><path d="M7 5v14M5 5h4M5 19h4M7 12h12M18 9v6" stroke="#fff" stroke-width="2.500"/></svg></button>
            <button class="running" aria-label="记事"><svg width="24" height="24"><rect width="24" height="24" rx="2" fill="#f0a020"/><path d="M3 6l14-3 3 16-13 2z" fill="#fff"/><path d="M6 9l8-1M6 12l9-1M7 15l6-1" stroke="#c09060"/><path d="M21 2l-9 13" stroke="#70380c" stroke-width="3"/></svg></button>
        </div>
        <div class="cpu">50%<br>CPU使用</div>
        <div class="tray">
            <svg width="16" height="16"><path d="M3 10l5-5 5 5" fill="none" stroke="#fff" stroke-width="1.500"/></svg>
            <svg width="16" height="16"><path d="M1 2v3h4V2M2 0v2M4 0v2M3 5v3h2M5.500 4.500h9v7h-9z" fill="none" stroke="#fff"/><path d="M7 6h6v4H7z" fill="#fff"/></svg>
            <svg width="16" height="16"><path d="M2 14C2 8 7 3 13 3M5 14c0-5 3-8 8-8M8 14c0-3 2-5 5-5" fill="none" stroke="#ccc" stroke-width="1.500"/><circle cx="12" cy="13" r="1.500" fill="#fff"/></svg>
            <svg width="16" height="16"><path d="M1 6h2l4-3v10l-4-3H1z" fill="none" stroke="#fff"/><path d="M9 6q2 2 0 4M11 4q4 4 0 8M13 2q5 6 0 12" fill="none" stroke="#ccc"/></svg>
            <span>中</span>
            <svg width="16" height="16"><use href="#sogou"/></svg>
        </div>
        <div class="clock">9:11<br>2017/6/26</div>
        <button class="action-center" aria-label="通知"><svg width="18" height="18"><path d="M1.500 2.500h15v11H11L8.500 16 8 13.500H1.500z" fill="none" stroke="#fff"/></svg></button>
    </div>
</body>
</html>
```

FILE: styles.css
```css
* {
    box-sizing: border-box;
}
body {
    margin: 0;
    height: 100vh;
    min-height: 700px;
    display: flex;
    flex-direction: column;
    overflow: hidden;
    position: relative;
    background: #f0f0f0;
    color: #000;
    font: 12px/16px "Open Sans", "Noto Sans CJK SC", sans-serif;
    white-space: nowrap;
}
.defs {
    position: absolute;
}
svg {
    flex: none;
    display: block;
}
h1, h2 {
    margin: 0;
    font-size: 12px;
    font-weight: normal;
}
ul {
    margin: 0;
    padding: 0;
    list-style: none;
}
button, input, select {
    font: inherit;
    color: inherit;
    background: none;
    border: 0;
    padding: 0;
    margin: 0;
}
kbd {
    font: 10px/16px "DejaVu Sans Mono", monospace;
}

/* title bar */
.titlebar {
    display: flex;
    align-items: center;
    height: 23px;
    background: #fff;
    color: #999;
}
.titlebar h1 {
    font: 13px/16px Roboto, "Noto Sans CJK SC", sans-serif;
}
.app-mark {
    align-self: flex-start;
    width: 48px;
    height: 29px;
    padding: 1px;
    border: 2px solid #000;
    background: #fff;
    z-index: 1;
}
.window-buttons {
    display: flex;
    gap: 34px;
    margin-left: auto;
    padding-right: 19px;
}
.ime-bar {
    position: absolute;
    top: 3px;
    right: 315px;
    display: flex;
    align-items: center;
    gap: 6px;
    height: 24px;
    padding: 0 4px 0 30px;
    border: 1px solid #a8c4e0;
    background: #fff;
    color: #1f74c8;
    font-size: 15px;
    z-index: 2;
}
.ime-logo {
    position: absolute;
    left: -2px;
    top: -4px;
}
.speed-ball {
    position: absolute;
    top: -28px;
    right: 212px;
    width: 46px;
    height: 46px;
    border: 2px solid #e8e8e8;
    border-radius: 50%;
    background: #2fbf55;
    box-shadow: 0 1px 4px #888;
    color: #fff;
    font-weight: bold;
    line-height: 16px;
    padding-top: 25px;
    text-align: center;
    z-index: 2;
}

/* menu */
.menubar {
    display: flex;
    align-items: center;
    height: 31px;
    padding-left: 7px;
}
.menus {
    display: flex;
    gap: 11px;
    margin-right: 17px;
}
.menubar > .tool {
    margin-right: 5px;
}
.notice {
    flex: 1;
    align-self: stretch;
    padding: 7px 0 0 30px;
    background: #f5f5f5;
    color: #630;
}
.account {
    display: flex;
    align-items: center;
    align-self: stretch;
    gap: 8px;
    padding-right: 34px;
    background: #f7f7f7;
}
.account > svg {
    margin-left: 2px;
}
.more {
    font: bold 15px/16px "Liberation Sans", sans-serif;
    align-self: flex-start;
    margin-left: auto;
    padding: 0 2px 0 0;
}
.strip-draw .more, .menubar .more, .strip-view .more {
    padding-right: 4px;
}

/* toolbars */
.tool {
    display: flex;
    align-items: center;
    gap: 4px;
    height: 24px;
}
.tool:disabled {
    color: #808080;
}
.drop::after, .caret, .combo::after {
    content: "";
    flex: none;
    border: 3px solid transparent;
    border-top-color: currentColor;
    border-bottom: 0;
}
.drop::after {
    margin-left: 2px;
}
.tight::after {
    margin-left: -2px;
}
.boxed {
    border: 1px solid #777;
    padding: 0 2px;
}
.toolrow {
    display: flex;
    gap: 4px;
    height: 29px;
}
.strip {
    display: flex;
    align-items: center;
    gap: 7px;
    border-radius: 3px;
    background: linear-gradient(#fdfdfd, #f0f0f0);
}
.strip-file {
    width: 149px;
    padding-left: 5px;
}
.strip-draw {
    width: 547px;
    padding-left: 4px;
}
.strip-view {
    flex: 1;
    padding-left: 1px;
}
.strip-view .boxed {
    margin-right: -3px;
}
.sep {
    flex: none;
    width: 1px;
    height: 18px;
    margin-right: -2px;
    background: #aaa;
}
.sigma {
    width: 16px;
    font: bold 16px/16px "Liberation Serif", serif;
    text-align: center;
}
.combo {
    display: flex;
    align-items: center;
    position: relative;
    gap: 6px;
}
.combo select {
    appearance: none;
    height: 22px;
    padding-left: 3px;
    background: linear-gradient(90deg, #fff 0 39px, #f4f4f4 39px);
}
.combo::after {
    position: absolute;
    right: 4px;
}
.combo .floor {
    width: 62px;
    padding-left: 2px;
    background: linear-gradient(90deg, #fff 0 50px, #f4f4f4 50px);
}
.combo .spec {
    width: 51px;
}
.combo + .sep {
    margin-left: -4px;
}

/* workspace */
.workspace {
    flex: 1;
    min-height: 0;
    display: flex;
    gap: 5px;
    position: relative;
    padding-bottom: 2px;
}
.nav-panel {
    width: 253px;
    display: flex;
    flex-direction: column;
    padding-top: 1px;
}
.nav-head {
    display: flex;
    align-items: center;
    gap: 6px;
    height: 16px;
    margin-bottom: 1px;
    border: 1px solid #999;
    border-left: 0;
    padding-right: 2px;
}
.nav-head h2 {
    flex: 1;
}
.nav-tab {
    height: 22px;
    flex: none;
    border: 1px solid #999;
    border-top-color: #fff;
    text-align: center;
}
.nav-tools {
    display: flex;
    align-items: center;
    gap: 5px;
    height: 27px;
    padding-left: 6px;
    border: 1px solid #999;
    border-width: 1px 1px 0;
    background: linear-gradient(#fdfdfd, #f0f0f0);
}
.nav-tree {
    flex: 1;
    min-height: 0;
    display: flex;
    overflow: hidden;
    margin-left: 1px;
    border: 2px solid #828790;
    border-width: 1px 2px 2px;
    background: #fff;
}
.nav-tree .tree {
    flex: 1;
    padding-top: 1px;
}
.tree .head {
    display: flex;
    align-items: center;
    height: 16px;
    padding-left: 6px;
    gap: 4px;
}
.tree .head svg:first-child {
    margin-right: 3px;
}
.tree .group > ul {
    margin-left: 12px;
    padding-left: 18px;
    border-left: 1px dotted #808080;
}
.tree .group:last-child > ul {
    border-left-color: transparent;
}
.tree ul li {
    display: flex;
    align-items: center;
    position: relative;
    height: 16px;
    gap: 5px;
}
.tree ul li kbd {
    margin-left: -5px;
}
/* dotted connector, the lower half only between siblings */
.tree ul li::before {
    content: "";
    align-self: flex-start;
    width: 10px;
    height: 9px;
    margin-right: -5px;
    border: 1px dotted #808080;
    border-width: 0 0 1px 1px;
}
.tree ul li:not(:last-child)::after {
    content: "";
    position: absolute;
    left: 0;
    top: 9px;
    height: 7px;
    border-left: 1px dotted #808080;
}
.current, .selected {
    display: flex;
    align-items: center;
    gap: 5px;
    height: 16px;
}
.current {
    background: #d9d9d9;
}
.video {
    margin-left: -4px;
}
.new {
    align-self: flex-start;
    margin-left: -4px;
    background: #ffe000;
    font: italic bold 8px/8px "Liberation Sans", sans-serif;
}
.scroll {
    display: flex;
    flex-direction: column;
    align-items: center;
    gap: 4px;
    width: 16px;
    padding: 4px 0;
    background: #f0f0f0;
}
.scroll .thumb {
    width: 100%;
    background: #cdcdcd;
}
.nav-scroll .track {
    flex: 160;
}
.nav-scroll .thumb {
    flex: 288;
}

/* components */
.component-pane {
    flex: 1;
    min-width: 0;
    display: flex;
    flex-direction: column;
    padding: 0 4px 0 1px;
}
.strip-component {
    height: 30px;
    padding-left: 4px;
}
.strip-component .combo {
    margin-left: -2px;
}
.columns {
    flex: 1;
    min-height: 0;
    display: flex;
    gap: 4px;
}
.component-list {
    width: 183px;
    display: flex;
    flex-direction: column;
    border-right: 2px solid #999;
    background: #fff;
}
.search {
    display: flex;
    gap: 5px;
    padding: 4px 0 3px 1px;
}
.search input {
    width: 157px;
    height: 22px;
    padding: 0 2px;
    border: 1px solid #7a7a7a;
}
.search input::placeholder {
    color: #777;
    opacity: 1;
}
.list-box {
    flex: 1;
    border: 2px solid #828790;
    border-right: 0;
}
.list-box .head {
    padding-left: 5px;
}
.list-box .tree .group > ul {
    padding-left: 17px;
}
.list-box .tree ul li::before {
    margin-right: -1px;
}
.list-box .tree ul li {
    gap: 3px;
}
.list-box kbd, .list-box .tree ul li kbd {
    margin-left: 4px;
}
.selected {
    flex: 1;
    gap: 3px;
    padding-left: 3px;
    margin-left: -3px;
    background: #316ac5;
}
.property {
    flex: 1;
    display: flex;
    flex-direction: column;
    background: #fff;
    border-right: 1px solid #aaa;
}
.property-tab {
    width: 64px;
    height: 18px;
    border: 1px solid #d9d9d9;
    border-bottom: 0;
}
.property-body {
    flex: 1;
    display: flex;
    justify-content: flex-end;
    padding: 4px 2px 4px 0;
    border-top: 1px solid #ddd;
    border-bottom: 1px solid #aaa;
}
.property-scroll {
    padding: 6px 0;
}
.property-scroll .thumb {
    flex: 386;
}
.property-scroll .track {
    flex: 140;
}

/* section editor window */
.dialog {
    position: absolute;
    left: 362px;
    right: 23px;
    top: 49px;
    bottom: 4px;
    display: flex;
    flex-direction: column;
    padding: 0 6px 7px;
    border: 1px solid #222;
    box-shadow: inset 1px 1px #f4f8fc, inset -1px -1px #58c4dc;
    background: linear-gradient(#99b4d1, #b9cfe8 30px);
}
.dialog h2 {
    height: 30px;
    padding: 11px 0 0 1px;
}
.dialog-body {
    flex: 1;
    min-height: 0;
    display: flex;
    flex-direction: column;
    background: #fff;
}
.tabs {
    display: flex;
    align-items: flex-end;
    height: 22px;
    padding-left: 3px;
    background: #f0f0f0;
}
.tabs button {
    width: 40px;
    height: 20px;
    padding-right: 4px;
    border: 1px solid #d9d9d9;
}
.tabs .active {
    width: 46px;
    height: 22px;
    padding: 0 8px 3px 0;
    border-bottom: 0;
    background: #fff;
}
.tab-page {
    flex: 1;
    min-height: 0;
    display: flex;
    flex-direction: column;
    align-items: flex-start;
    margin: 2px 3px;
    padding: 0 0 5px 2px;
    border: 1px solid #e4e4e4;
    background: #f0f0f0;
}
.bar {
    height: 28px;
    gap: 8px;
    padding: 0 5px;
}
.bar .sep {
    margin-right: -5px;
}
.toggle {
    display: flex;
    align-items: center;
    height: 23px;
    padding: 0 4px;
    border: 1px solid transparent;
}
.toggle.icon {
    gap: 3px;
    padding: 0 3px;
}
.toggle.on {
    border-color: #0078d7;
    background: #dfecf8;
}
.bar .caret {
    margin-left: -5px;
}
.bar .combo {
    margin-left: -5px;
}
.bar .combo + .sep {
    margin-left: -4px;
}
.bar .toggle + .tool {
    margin-left: -3px;
}
.choice {
    display: flex;
    align-items: center;
}
.canvas {
    flex: 1;
    min-height: 0;
    width: 100%;
    border: 2px solid #f00;
    background: #14171e;
}
.canvas svg {
    width: 100%;
    height: 100%;
}
.canvas path {
    fill: none;
}
.grid path {
    stroke: #303742;
    stroke-dasharray: 12 3 3 3;
}
.grid .slash {
    stroke-dasharray: none;
}
.grid .ray {
    stroke: #777;
    stroke-dasharray: 3 2;
}
.axis-text {
    font: 14px "Liberation Serif", serif;
    fill: #363d47;
}
.cover {
    stroke: #9cc4ec;
    stroke-dasharray: 3 3;
}
.outline {
    stroke: #f4f4f4;
    stroke-width: 2;
}
.bar-main {
    stroke: #c8161d;
    stroke-width: 4;
}
.bar-thin {
    stroke: #c8161d;
    stroke-width: 2;
}
.dots {
    stroke: #ffd820;
    stroke-width: 2;
}
.dim {
    stroke: #76b862;
}
.dim-text {
    font: 7px "DejaVu Sans Mono", monospace;
    fill: #fff;
    text-anchor: middle;
}
.bar-dim {
    stroke: #fff;
}
.bar-text {
    font: bold 5px "DejaVu Sans Mono", monospace;
    fill: #0f0;
    text-anchor: middle;
}
.snap {
    display: flex;
    margin: 3px 0 0 1px;
}
.snap .gap {
    margin-left: 4px;
}
.dialog-status {
    display: flex;
    align-items: center;
    gap: 2px;
    height: 22px;
    background: linear-gradient(#fdfdfd, #f0f0f0);
}
.coord, .hint {
    height: 22px;
    padding: 3px 4px;
    border: 1px solid #d4d4d4;
}
.coord {
    width: 98px;
}
.hint {
    flex: 1;
    padding-left: 1px;
}
.dialog-status svg {
    margin-left: -15px;
    margin-right: 3px;
    align-self: flex-end;
}

/* status bar */
.statusbar {
    display: flex;
    gap: 2px;
    height: 21px;
    background: #fff;
}
.cell {
    padding: 2px 1px;
    border: 1px solid #d4d4d4;
    background: linear-gradient(#fdfdfd, #f0f0f0);
}
.blank {
    width: 148px;
}
.height {
    width: 78px;
}
.base {
    width: 98px;
}
.zero {
    width: 48px;
}
.range {
    flex: 1;
}
.fps {
    width: 70px;
}

/* taskbar */
.taskbar {
    display: flex;
    align-items: center;
    height: 40px;
    background: #000c10;
    color: #fff;
}
.start {
    width: 48px;
    height: 40px;
    padding-left: 16px;
    background: #000;
}
.cortana {
    display: flex;
    align-items: center;
    gap: 5px;
    width: 344px;
    height: 40px;
    padding: 0 14px 0 9px;
    background: #333;
}
.cortana input {
    flex: 1;
    font-size: 14px;
}
.cortana input::placeholder {
    color: #9a9a9a;
    opacity: 1;
}
.apps {
    display: flex;
    align-items: center;
    padding-left: 2px;
}
.apps button {
    display: flex;
    align-items: center;
    justify-content: center;
    width: 49px;
    height: 40px;
    padding-top: 1px;
}
.divider {
    width: 5px;
    height: 16px;
    margin: 0 10px 0 9px;
    border: 1px solid #555;
    border-width: 0 1px;
}
.apps .running {
    background: linear-gradient(#76b9ed, #76b9ed) center bottom / 40px 2px no-repeat;
}
.apps .current-app {
    background: linear-gradient(#76b9ed, #76b9ed) center bottom / 49px 2px no-repeat #313a3f;
}
.cpu, .clock {
    text-align: center;
    line-height: 18px;
}
.cpu {
    margin-left: auto;
}
.tray {
    display: flex;
    align-items: center;
    gap: 9px;
    margin: 0 19px 0 18px;
}
.tray span {
    font-size: 14px;
}
.action-center {
    display: flex;
    align-items: center;
    justify-content: center;
    width: 54px;
    height: 40px;
    margin-right: 6px;
    border-right: 1px solid #555;
    background: #000;
}
```
